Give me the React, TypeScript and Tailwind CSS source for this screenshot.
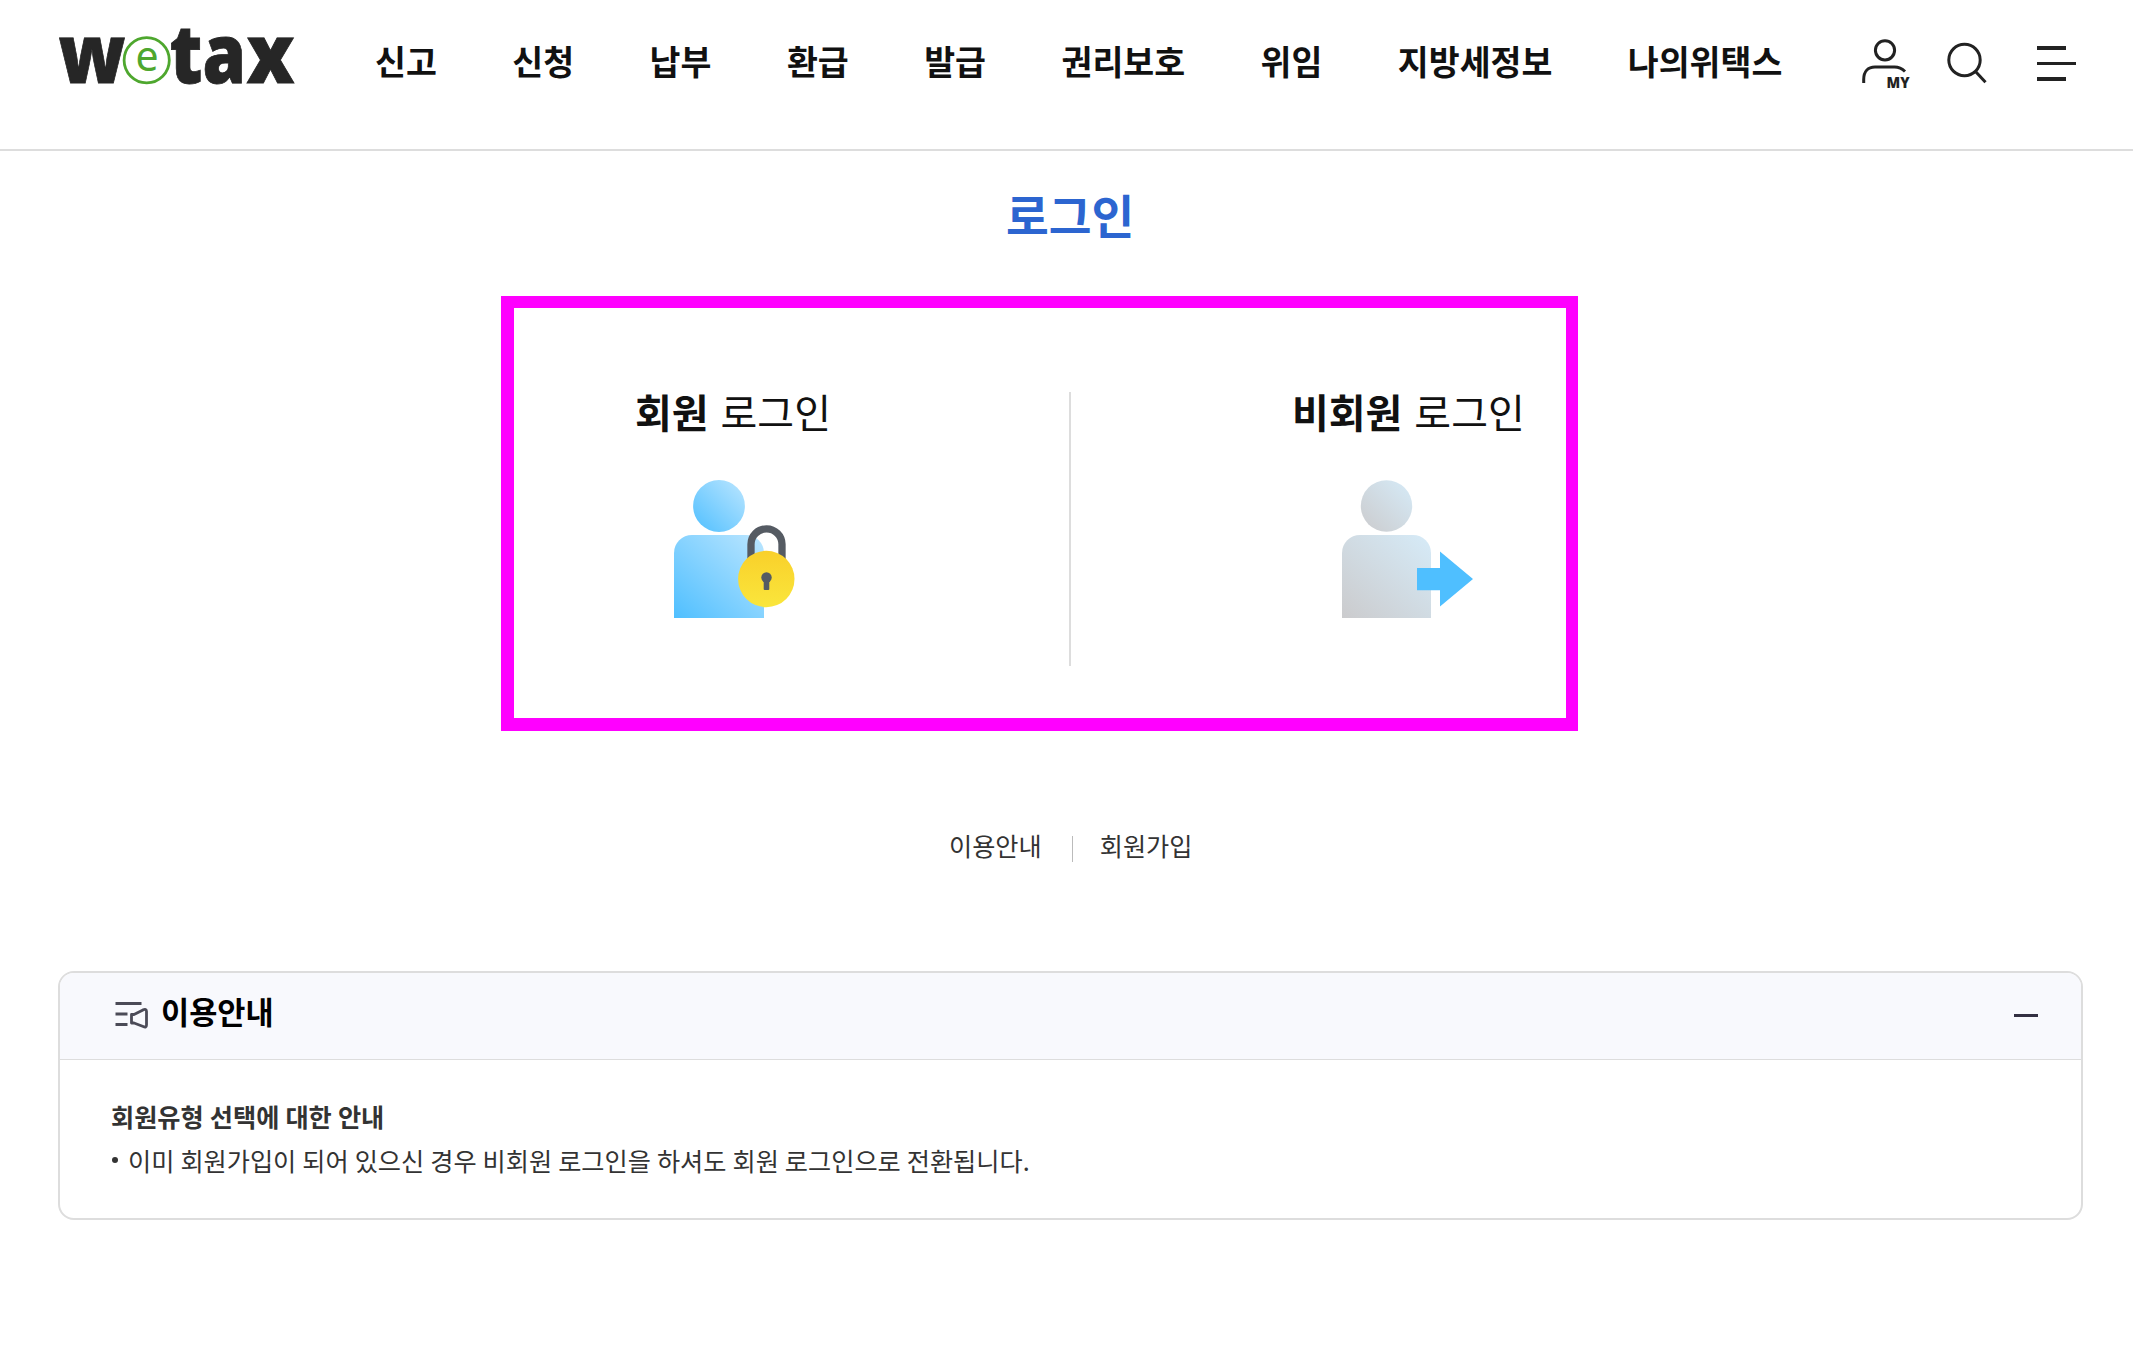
import React from 'react';

const MENU = ['신고', '신청', '납부', '환급', '발급', '권리보호', '위임', '지방세정보', '나의위택스'];

const Logo: React.FC = () => (
  <svg width="242" height="90" viewBox="0 0 242 90" className="block overflow-visible">
    <g fill="#262626" stroke="#262626" strokeWidth=".8" fontFamily="'Noto Sans', 'Open Sans', sans-serif" fontWeight="900" fontSize="82">
      <text x=".5" y="65" textLength="67" lengthAdjust="spacingAndGlyphs">w</text>
      <text x="111.500" y="65" textLength="33" lengthAdjust="spacingAndGlyphs">t</text>
      <text x="144.500" y="65" textLength="43.500" lengthAdjust="spacingAndGlyphs">a</text>
      <text x="188.500" y="65" textLength="48" lengthAdjust="spacingAndGlyphs">x</text>
    </g>
    <circle cx="88.7" cy="42.3" r="22.6" fill="#fff" stroke="#4ea72e" strokeWidth="2.8" />
    <text x="89" y="52.500" textAnchor="middle" fill="#4ea72e" fontFamily="'Noto Sans', sans-serif" fontSize="41">e</text>
  </svg>
);

const MyIcon: React.FC = () => (
  <svg width="50" height="60" viewBox="0 0 50 60" fill="none" stroke="#222" strokeWidth="3" className="overflow-visible">
    <circle cx="25" cy="15.3" r="9.6" />
    <path d="M3.7 48v-3.500C3.700 36.500 8 32 15 32h19.500c4.500 0 7.500 1.500 10.500 4.500" />
    <text x="26.500" y="53.300" textLength="23" lengthAdjust="spacingAndGlyphs" fill="#222" stroke="none" fontFamily="'Open Sans', sans-serif" fontWeight="800" fontSize="16">MY</text>
  </svg>
);

const SearchIcon: React.FC = () => (
  <svg width="42" height="42" viewBox="0 0 42 42" fill="none" stroke="#222" strokeWidth="3">
    <circle cx="18.500" cy="18" r="15.700" />
    <path d="M29.300 29.300 39.500 40.300" />
  </svg>
);

const MenuIcon: React.FC = () => (
  <svg width="40" height="36" viewBox="0 0 40 36" fill="#222">
    <rect x="0" y="0" width="29" height="4" />
    <rect x="0" y="16" width="39" height="3" />
    <rect x="0" y="31" width="29" height="4" />
  </svg>
);

const NoticeIcon: React.FC = () => (
  <svg width="34" height="30" viewBox="0 0 34 30" fill="none" stroke="#4b4b57" strokeWidth="2.800">
    <path d="M.5 4.500h26M.5 15h12M.5 25.500h12" />
    <path d="M16.500 15.500h2.500l9-4.600q3.500-1.500 3.500 1.600v13.500q0 3-3.300 1.500l-9.200-3.500h-2.500z" strokeWidth="2.800" strokeLinejoin="round" />
  </svg>
);

const MemberIcon: React.FC = () => (
  <svg width="122" height="140" viewBox="0 0 122 140" className="block">
    <defs>
      <linearGradient id="member" x1="0" y1="1" x2="1" y2="0">
        <stop offset="0" stopColor="#4fbfff" />
        <stop offset="1" stopColor="#bce6ff" />
      </linearGradient>
      <linearGradient id="lock" x1="0" y1="0" x2="0" y2="1">
        <stop offset="0" stopColor="#f9d02a" />
        <stop offset="1" stopColor="#fae63c" />
      </linearGradient>
    </defs>
    <circle cx="45" cy="26" r="25.900" fill="url(#member)" />
    <path d="M0 73a18 18 0 0 1 18-18h54a18 18 0 0 1 18 18v65H0z" fill="url(#member)" />
    <path d="M77 82V64.300a15.500 15.500 0 0 1 31 0v17.700" fill="none" stroke="#555b63" strokeWidth="7.300" />
    <circle cx="92.300" cy="99" r="28.200" fill="url(#lock)" />
    <circle cx="92.500" cy="97.500" r="5.200" fill="#555b63" />
    <rect x="89.700" y="98" width="5.600" height="12" rx="1" fill="#555b63" />
  </svg>
);

const GuestIcon: React.FC = () => (
  <svg width="134" height="140" viewBox="0 0 134 140" className="block">
    <defs>
      <linearGradient id="guest" x1="0" y1="1" x2="1" y2="0">
        <stop offset="0" stopColor="#cbcbcd" />
        <stop offset="1" stopColor="#d6ebf8" />
      </linearGradient>
    </defs>
    <circle cx="44.500" cy="26" r="25.700" fill="url(#guest)" />
    <path d="M0 73a18 18 0 0 1 18-18h53a18 18 0 0 1 18 18v65H0z" fill="url(#guest)" />
    <path d="M75 88h23V71.500L131 99 98 126.500V110.300H75z" fill="#4fbfff" />
  </svg>
);

const Header: React.FC = () => (
  <header className="flex items-start h-[151px] border-b-2 border-[#ddd] pl-[58px]">
    <div className="w-[317px] pt-[18px]">
      <Logo />
    </div>
    <nav className="flex gap-[75.5px] pt-[41px] text-[33.600px] leading-[40px] font-bold text-[#111] whitespace-nowrap">
      {MENU.map((item) => (
        <a key={item}>{item}</a>
      ))}
    </nav>
    <div className="ml-auto flex w-[273px] items-start">
      <button className="mt-[35px]"><MyIcon /></button>
      <button className="mt-[42px] ml-[36px]"><SearchIcon /></button>
      <button className="mt-[46px] ml-[49px]"><MenuIcon /></button>
    </div>
  </header>
);

const LoginChoice: React.FC = () => (
  <section className="ml-[501px] mt-[56px] flex w-[1077px] h-[435px] border-[12px] border-l-[13px] border-b-[13px] border-[#ff00ff] pt-[84px] text-[40px] leading-[50px] text-[#111] whitespace-nowrap [word-spacing:3px]">
    <div className="w-[555px] pl-[121px] -mt-[6px]">
      <h2><b>회원</b> 로그인</h2>
      <div className="pl-[39px] pt-[44px]"><MemberIcon /></div>
    </div>
    <div className="h-[274px] w-[2px] bg-[#ddd]" />
    <div className="pl-[221px] -mt-[6px]">
      <h2><b>비회원</b> 로그인</h2>
      <div className="pl-[50px] pt-[44px]"><GuestIcon /></div>
    </div>
  </section>
);

const Notice: React.FC = () => (
  <section className="ml-[58px] mt-[109px] w-[2025px] h-[249px] overflow-hidden rounded-2xl border-2 border-[#ddd]">
    <div className="flex h-[87px] items-start justify-between border-b border-[#ddd] bg-[#f8f9fd] pl-[55px] pr-[43px]">
      <div className="flex items-start">
        <span className="pt-[26px]"><NoticeIcon /></span>
        <h3 className="ml-[12px] mt-[18px] text-[30.600px] leading-[40px] font-bold text-black">이용안내</h3>
      </div>
      <span className="mt-[41px] h-[3px] w-[24px] bg-[#333042]" />
    </div>
    <div className="pl-[51px] pt-[34px] text-[25.200px] leading-[44px] text-[#333] [word-spacing:.4px]">
      <p className="font-bold">회원유형 선택에 대한 안내</p>
      <p className="flex items-center">
        <span className="ml-[1px] mr-[10px] size-[6px] rounded-full bg-[#333]" />
        이미 회원가입이 되어 있으신 경우 비회원 로그인을 하셔도 회원 로그인으로 전환됩니다.
      </p>
    </div>
  </section>
);

export default function App() {
  return (
    <div className="h-[1357px] w-[2133px] overflow-hidden bg-white font-['Noto_Sans_CJK_KR',sans-serif]">
      <Header />
      <main>
        <h1 className="pl-[1006px] pt-[37px] text-[46.500px] leading-[52px] font-bold text-[#2c65d0]">로그인</h1>
        <LoginChoice />
        <div className="mt-[97px] flex pl-[949px] text-[25.200px] leading-[34px] text-[#333]">
          <a>이용안내</a>
          <span className="ml-[30px] mr-[27px] mt-[8px] h-[26px] w-px bg-[#bbb]" />
          <a>회원가입</a>
        </div>
        <Notice />
      </main>
    </div>
  );
}
